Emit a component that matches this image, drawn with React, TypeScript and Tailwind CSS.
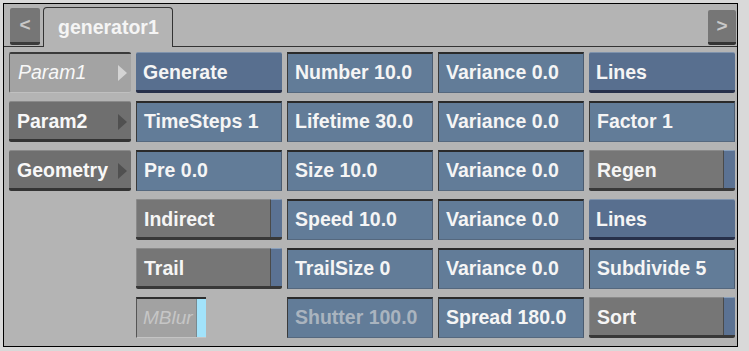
import React from "react";

const font = { fontFamily: '"Liberation Sans", Arial, sans-serif' };

function Value({ label, dim }: { label: string; dim?: boolean }) {
  return (
    <div
      className={`h-[41px] w-[146px] flex items-center pl-[7px] bg-[#627c98] border-t-2 border-l border-r border-b border-t-[#2a2a2a] border-l-[#3a3a3a] border-r-[#4a5b70] border-b-[#55687e] text-[19.5px] font-bold whitespace-nowrap ${
        dim ? "text-[#aab4bf]" : "text-[#f5f5f5]"
      }`}
    >
      {label}
    </div>
  );
}

function Btn({ label }: { label: string }) {
  return (
    <div className="h-[41px] w-[146px] flex items-center pl-[7px] pt-[2px] bg-[#586f8f] border-t border-t-[#7f93ad] border-b-[3px] border-b-[#27304a] rounded-[2px] text-[19.5px] font-bold text-[#f5f5f5] whitespace-nowrap">
      {label}
    </div>
  );
}

function Toggle({ label }: { label: string }) {
  return (
    <div className="h-[41px] w-[146px] flex bg-[#767676] border-b-[3px] border-b-[#383838] rounded-[2px] overflow-hidden">
      <div className="flex-1 flex items-center pl-[7px] pt-[2px] text-[19.5px] font-bold text-[#f5f5f5] border-t border-t-[#8a8a8a] border-l border-l-[#8a8a8a] whitespace-nowrap">
        {label}
      </div>
      <div className="w-[12px] bg-[#5b7293] border-t border-t-[#8aa0bb] border-l border-l-[#4a4a4a]" />
    </div>
  );
}

function Param({ label, active }: { label: string; active?: boolean }) {
  return (
    <div
      className={`h-[41px] w-[122px] flex items-center justify-between pl-[8px] pr-[4px] rounded-[2px] text-[19.5px] text-[#f8f8f8] ${
        active
          ? "bg-[#a3a3a3] border-t-2 border-t-[#3a3a3a] border-l border-l-[#5a5a5a] border-b border-b-[#c0c0c0] italic font-normal"
          : "bg-[#6f6f6f] pt-[2px] border-t border-t-[#8a8a8a] border-b-[3px] border-b-[#343434] font-bold"
      }`}
    >
      <span>{label}</span>
      <svg width="9" height="16" viewBox="0 0 9 16">
        <path d="M0 0 L9 8 L0 16 Z" fill={active ? "#d4d4d4" : "#505050"} />
      </svg>
    </div>
  );
}

function MBlur() {
  return (
    <div className="h-[41px] w-[70px] flex bg-[#a2a2a2] border-t-2 border-t-[#2e2e2e] border-l border-l-[#555] border-b border-b-[#c4c4c4]">
      <div className="flex-1 flex items-center pl-[6px] text-[19px] italic font-normal text-[#c6c6c6] whitespace-nowrap">
        MBlur
      </div>
      <div className="w-[10px] bg-[#a2e3fb] border-l border-l-[#7a8a90]" />
    </div>
  );
}

export default function App() {
  return (
    <div className="w-[749px] h-[351px] bg-[#d9d9d9] p-[3px]" style={font}>
      <div className="w-[735px] h-[344px] border border-black bg-[#b4b4b4] flex flex-col">
        <div className="h-[43px] flex items-end border-b border-b-[#333] pl-[6px] pr-0">
          <div className="w-[30px] h-[37px] mb-[1px] bg-[#767676] border-b-[3px] border-b-[#3a3a3a] rounded-[2px] flex items-center justify-center text-[#c8c8c8] text-[19px] font-bold">
            &lt;
          </div>
          <div className="ml-[3px] w-[130px] h-[40px] mb-[-1px] bg-[#b4b4b4] border border-[#333] border-b-0 rounded-t-[4px] flex items-center pl-[14px] text-[19.5px] font-bold text-[#f5f5f5]">
            generator1
          </div>
          <div className="flex-1" />
          <div className="w-[28px] h-[35px] mb-[1px] mr-[1px] bg-[#767676] border-b-[3px] border-b-[#333] rounded-[2px] flex items-center justify-center text-[#c8c8c8] text-[19px] font-bold">
            &gt;
          </div>
        </div>
        <div className="flex gap-[5px] pl-[5px] pt-[5px]">
          <div className="flex flex-col gap-[8px]">
            <Param label="Param1" active />
            <Param label="Param2" />
            <Param label="Geometry" />
          </div>
          <div className="flex flex-col gap-[8px]">
            <Btn label="Generate" />
            <Value label="TimeSteps 1" />
            <Value label="Pre 0.0" />
            <Toggle label="Indirect" />
            <Toggle label="Trail" />
            <MBlur />
          </div>
          <div className="flex flex-col gap-[8px]">
            <Value label="Number 10.0" />
            <Value label="Lifetime 30.0" />
            <Value label="Size 10.0" />
            <Value label="Speed 10.0" />
            <Value label="TrailSize 0" />
            <Value label="Shutter 100.0" dim />
          </div>
          <div className="flex flex-col gap-[8px]">
            <Value label="Variance 0.0" />
            <Value label="Variance 0.0" />
            <Value label="Variance 0.0" />
            <Value label="Variance 0.0" />
            <Value label="Variance 0.0" />
            <Value label="Spread 180.0" />
          </div>
          <div className="flex flex-col gap-[8px]">
            <Btn label="Lines" />
            <Value label="Factor 1" />
            <Toggle label="Regen" />
            <Btn label="Lines" />
            <Value label="Subdivide 5" />
            <Toggle label="Sort" />
          </div>
        </div>
      </div>
    </div>
  );
}
